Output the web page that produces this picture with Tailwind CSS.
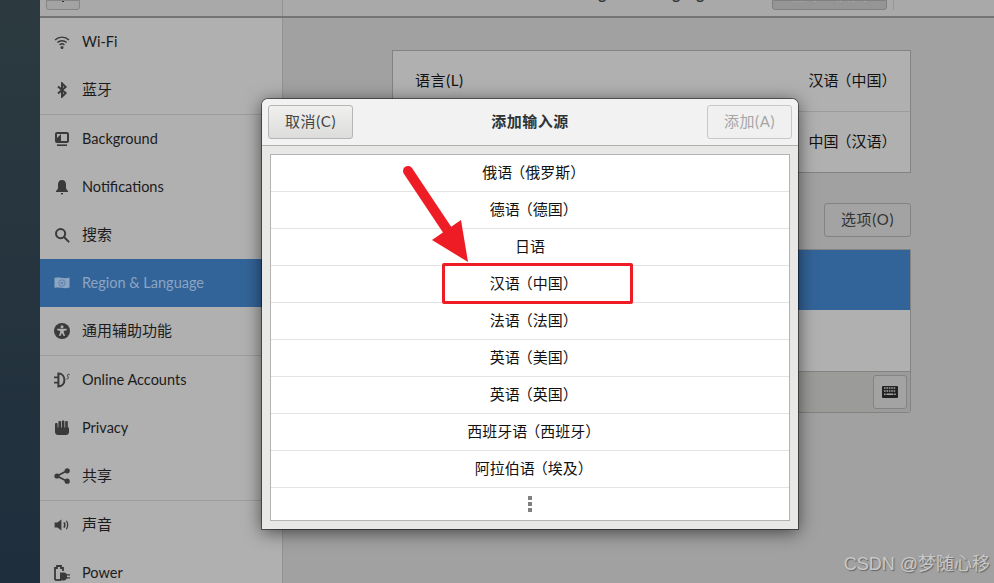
<!DOCTYPE html>
<html lang="zh">
<head>
    <meta charset="UTF-8">
    <title>Region &amp; Language</title>
    <script src="https://cdn.jsdelivr.net/npm/@tailwindcss/browser@4"></script>
</head>
<body class="w-[994px] h-[583px] overflow-hidden relative flex bg-[#22313c] font-['Lato','Noto_Sans_CJK_SC',sans-serif] text-[15px] [font-feature-settings:'halt'] [word-spacing:1.6px]">
    <!-- desktop strip -->
    <div class="w-[40px] h-full shrink-0 bg-gradient-to-b from-[#2c3a40] to-[#1e2e3c]"></div>

    <!-- settings window -->
    <div class="w-[954px] h-full flex flex-col">
        <div class="h-[18px] shrink-0 flex bg-[#a9a9a9] border-b-2 border-[#747474] overflow-hidden">
            <div class="w-[243px] border-r border-[#929292] pl-[6px]">
                <div class="w-[34px] h-[10px] bg-[#a3a3a3] border border-[#858585] rounded-b-[3px] flex justify-center">
                    <div class="w-[2px] h-[1px] bg-[#333]"></div>
                </div>
            </div>
            <div class="flex-1 flex">
                <div class="w-[489px] h-[16px] overflow-hidden flex justify-end pr-[60px]">
                    <div class="font-bold text-[#2e3436] -mt-[17px] leading-[20px] whitespace-nowrap">Region &amp; Language</div>
                </div>
                <div class="w-[115px] h-[10px] bg-[#959595] border border-[#808080] rounded-b-[3px] overflow-hidden flex justify-center">
                    <div class="-mt-[17px] leading-[20px] text-[#b5b5b5] whitespace-nowrap">立即重启(R)</div>
                </div>
                <div class="w-px h-[10px] bg-[#969696] ml-[6px]"></div>
            </div>
        </div>
        <div class="flex-1 flex min-h-0">
            <!-- sidebar -->
            <div class="w-[243px] shrink-0 bg-[#b0b0b0] border-r border-[#929292] text-[#1c1c1c] [word-spacing:0]">
                <div class="h-[47px] flex items-center pl-[14px] gap-[12px]">
                    <svg class="w-[16px] h-[16px] shrink-0" viewBox="0 0 16 16" fill="none" stroke="#3a3a3a" stroke-width="1.4"><path d="M1 6 A10 10 0 0 1 15 6"/><path d="M3.4 8.6 A6.6 6.6 0 0 1 12.6 8.6"/><path d="M5.6 11 A3.4 3.4 0 0 1 10.4 11"/><circle cx="8" cy="13.6" r="1.5" fill="#3a3a3a" stroke="none"/></svg>
                    <span class="text-[14.5px]">Wi-Fi</span>
                </div>
                <div class="h-[49px] flex items-center pl-[14px] gap-[12px]">
                    <svg class="w-[16px] h-[16px] shrink-0" viewBox="0 0 16 16" fill="none" stroke="#3a3a3a" stroke-width="2"><path d="M4 4.6 L11.6 11 L8 14.6 V1.4 L11.6 5 L4 11.4"/></svg>
                    <span>蓝牙</span>
                </div>
                <div class="h-px bg-[#9c9c9c]"></div>
                <div class="h-[48px] flex items-center pl-[14px] gap-[12px]">
                    <svg class="w-[16px] h-[16px] shrink-0" viewBox="0 0 16 16"><rect x="1" y="1" width="14" height="11" rx="2" fill="#3a3a3a"/><rect x="3" y="3" width="10" height="7" fill="#b0b0b0"/><path d="M3 10 V7 L7 3 V10 Z" fill="#3a3a3a"/><rect x="3" y="13.4" width="10" height="1.6" fill="#3a3a3a"/></svg>
                    <span class="text-[14.5px]">Background</span>
                </div>
                <div class="h-[48px] flex items-center pl-[14px] gap-[12px]">
                    <svg class="w-[16px] h-[16px] shrink-0" viewBox="0 0 16 16" fill="#3a3a3a"><path d="M8 1 C5.4 1 4 3 4 5.4 V8.4 C4 10 3 11 2 12 V13 H14 V12 C13 11 12 10 12 8.4 V5.4 C12 3 10.6 1 8 1 Z"/><rect x="7" y="14" width="2" height="1.4"/></svg>
                    <span class="text-[14.5px]">Notifications</span>
                </div>
                <div class="h-[48px] flex items-center pl-[14px] gap-[12px]">
                    <svg class="w-[16px] h-[16px] shrink-0" viewBox="0 0 16 16" fill="none" stroke="#3a3a3a" stroke-width="2"><circle cx="6.6" cy="6.6" r="4.6"/><path d="M10 10 L14.6 14.6" stroke-linecap="round"/></svg>
                    <span class="-mt-[2px]">搜索</span>
                </div>
                <div class="h-[48px] flex items-center pl-[14px] gap-[12px] bg-[#336499] text-[#8ba5c2]">
                    <svg class="w-[16px] h-[16px] shrink-0" viewBox="0 0 16 16" fill="none"><path d="M0.5 3 C5 1.6 10 4.4 15.5 2.6 V12.6 C10 14.2 5 11.6 0.5 13 Z" fill="#8ba5c2"/><circle cx="8" cy="8" r="3.2" stroke="#5f84ad" stroke-width="1"/><circle cx="8" cy="8" r="1.3" fill="#5f84ad"/></svg>
                    <span class="text-[14.5px]">Region &amp; Language</span>
                </div>
                <div class="h-[48px] flex items-center pl-[14px] gap-[12px]">
                    <svg class="w-[16px] h-[16px] shrink-0" viewBox="0 0 16 16"><circle cx="8" cy="8" r="8" fill="#3a3a3a"/><circle cx="8" cy="3.8" r="1.5" fill="#b0b0b0"/><path d="M3.2 5.8 H12.8 V7.2 L9.6 8 L11 13 H9.6 L8 10 L6.4 13 H5 L6.4 8 L3.2 7.2 Z" fill="#b0b0b0"/></svg>
                    <span class="-mt-[2px]">通用辅助功能</span>
                </div>
                <div class="h-px bg-[#9c9c9c]"></div>
                <div class="h-[48px] flex items-center pl-[14px] gap-[12px]">
                    <svg class="w-[16px] h-[16px] shrink-0" viewBox="0 0 16 16" fill="none" stroke="#3a3a3a" stroke-width="1.6"><path d="M0 5.4 H4.6 M0 10.6 H4.6"/><path d="M4.4 1.6 C8.4 1.6 10.4 4.6 10.4 8 C10.4 11.4 8.4 14.4 4.4 14.4 Z" stroke-width="2"/><path d="M15.6 2.6 C14 1.6 13 2.8 13.8 4.2 C14.6 5.6 14.2 7.6 12.4 6.8" stroke-width="1"/></svg>
                    <span class="text-[14.5px]">Online Accounts</span>
                </div>
                <div class="h-[48px] flex items-center pl-[14px] gap-[12px]">
                    <svg class="w-[16px] h-[16px] shrink-0" viewBox="0 0 16 16" fill="#3a3a3a"><rect x="1" y="3" width="2.6" height="8" rx="1"/><rect x="4.4" y="1" width="2.6" height="8" rx="1"/><rect x="7.8" y="0.4" width="2.6" height="8" rx="1"/><rect x="11.2" y="1" width="2.6" height="8" rx="1"/><path d="M1 7.6 H15 V12 C15 14 13.6 15 12 15 H4 C2.4 15 1 14 1 12 Z"/></svg>
                    <span class="text-[14.5px]">Privacy</span>
                </div>
                <div class="h-[48px] flex items-center pl-[14px] gap-[12px]">
                    <svg class="w-[16px] h-[16px] shrink-0" viewBox="0 0 16 16" fill="#3a3a3a" stroke="#3a3a3a"><path d="M3 8 L13 2.8 M3 8 L13 13.2" stroke-width="1.6" fill="none"/><circle cx="3" cy="8" r="2.6" stroke="none"/><circle cx="13.2" cy="2.8" r="2.6" stroke="none"/><circle cx="13.2" cy="13.2" r="2.6" stroke="none"/></svg>
                    <span class="-mt-[2px]">共享</span>
                </div>
                <div class="h-px bg-[#9c9c9c]"></div>
                <div class="h-[48px] flex items-center pl-[14px] gap-[12px]">
                    <svg class="w-[16px] h-[16px] shrink-0" viewBox="0 0 16 16" fill="none"><path d="M0.6 5.6 H3.4 L7.4 2.4 V13.6 L3.4 10.4 H0.6 Z" fill="#3a3a3a"/><path d="M10 5.4 C11 7 11 9 10 10.6" stroke="#3a3a3a" stroke-width="1.6"/><path d="M12.4 3.8 C14 6.4 14 9.6 12.4 12.2" stroke="#3a3a3a" stroke-width="1.2"/></svg>
                    <span class="-mt-[2px]">声音</span>
                </div>
                <div class="h-[48px] flex items-center pl-[14px] gap-[12px]">
                    <svg class="w-[16px] h-[16px] shrink-0" viewBox="0 0 16 16" fill="none"><path d="M1 15 V3 H3 V1 H7 V3 H9 V6" stroke="#3a3a3a" stroke-width="1.8"/><path d="M1 15 H7" stroke="#3a3a3a" stroke-width="1.8"/><path d="M6 7.6 H10 C11.6 7.6 12.4 8.4 12.6 9.2 H16 V10.6 H13 V12.2 H16 V13.6 H12.6 C12.4 14.6 11.6 15.4 10 15.4 H6 Z" fill="#3a3a3a"/></svg>
                    <span class="text-[14.5px]">Power</span>
                </div>
            </div>
            <!-- main panel -->
            <div class="flex-1 bg-[#a1a1a1] pt-[32px] pl-[109px]">
                <div class="w-[519px] h-[123px] bg-[#b0b0b0] border border-[#838383] flex flex-col text-[#111]">
                    <div class="h-[61px] shrink-0 flex items-center justify-between pl-[22px] pr-[21px] pb-[2px] border-b border-[#9c9c9c]">
                        <span class="tracking-[0.6px]">语言(L)</span><span>汉语 （中国）</span>
                    </div>
                    <div class="flex-1 flex items-center justify-end pr-[21px] pb-[2px]">中国 （汉语）</div>
                </div>
                <div class="w-[519px] flex justify-end mt-[30px]">
                    <div class="w-[87px] h-[34px] pb-[2px] flex items-center justify-center bg-[#a3a3a3] border border-[#838383] rounded-[3px] text-[#333] tracking-[0.6px]">选项(O)</div>
                </div>
                <div class="w-[519px] h-[164px] mt-[12px] border border-[#838383] rounded-b-[3px] flex flex-col">
                    <div class="h-[60px] shrink-0 bg-[#336499]"></div>
                    <div class="h-[62px] shrink-0 bg-[#b0b0b0] border-b border-[#838383]"></div>
                    <div class="flex-1 bg-[#9b9b9a] flex justify-end items-center pr-[3px]">
                        <div class="w-[34px] h-[34px] bg-[#a3a3a3] border border-[#838383] rounded-[3px] flex items-center justify-center">
                            <svg width="16" height="12" viewBox="0 0 16 12"><rect width="16" height="12" rx="1" fill="#222"/><path d="M2 2 H14 M2 5 H14" stroke="#a3a3a3" stroke-width="1.4" stroke-dasharray="1.6 0.8"/><path d="M2 8.2 H14" stroke="#a3a3a3" stroke-width="1.4" stroke-dasharray="1.6 0.8 7 0.8 1.6 0.8"/></svg>
                        </div>
                    </div>
                </div>
            </div>
        </div>
    </div>

    <!-- dialog -->
    <div class="absolute left-[262px] top-[99px] w-[536px] h-[430px] bg-[#e8e8e7] rounded-t-[6px] shadow-[0_0_0_1px_rgba(0,0,0,0.45),0_3px_18px_rgba(0,0,0,0.6)] flex flex-col">
        <div class="h-[47px] shrink-0 bg-[#f2f2f2] rounded-t-[6px] border-b border-[#b0b0ae] flex items-center justify-between px-[6px]">
            <div class="w-[85px] h-[34px] pb-[2px] flex items-center justify-center rounded-[3px] border border-[#b5b5b3] bg-gradient-to-b from-[#f0f0ef] to-[#dcdcda] text-[#444] tracking-[0.6px]">取消(C)</div>
            <div class="font-bold tracking-[0.5px] text-[#2e3436] -mt-[2px]">添加输入源</div>
            <div class="w-[85px] h-[34px] pb-[2px] flex items-center justify-center rounded-[3px] border border-[#c8c8c6] bg-[#f0f0f0] text-[#a5a5a5] tracking-[0.6px]">添加(A)</div>
        </div>
        <div class="flex-1 min-h-0 px-[8px] pt-[8px] pb-[8px]">
            <div class="h-full bg-white border border-[#b4b4b2] text-[#111] flex flex-col">
                <div class="h-[37px] shrink-0 pb-[2px] flex items-center justify-center border-b border-[#e3e3e3]">俄语 （俄罗斯）</div>
                <div class="h-[37px] shrink-0 pb-[2px] flex items-center justify-center border-b border-[#e3e3e3]">德语 （德国）</div>
                <div class="h-[37px] shrink-0 pb-[2px] flex items-center justify-center border-b border-[#e3e3e3]">日语</div>
                <div class="h-[37px] shrink-0 pb-[2px] flex items-center justify-center border-b border-[#e3e3e3]">汉语 （中国）</div>
                <div class="h-[37px] shrink-0 pb-[2px] flex items-center justify-center border-b border-[#e3e3e3]">法语 （法国）</div>
                <div class="h-[37px] shrink-0 pb-[2px] flex items-center justify-center border-b border-[#e3e3e3]">英语 （美国）</div>
                <div class="h-[37px] shrink-0 pb-[2px] flex items-center justify-center border-b border-[#e3e3e3]">英语 （英国）</div>
                <div class="h-[37px] shrink-0 pb-[2px] flex items-center justify-center border-b border-[#e3e3e3]">西班牙语 （西班牙）</div>
                <div class="h-[37px] shrink-0 pb-[2px] flex items-center justify-center border-b border-[#e3e3e3]">阿拉伯语 （埃及）</div>
                <div class="flex-1 flex flex-col items-center justify-center gap-[2px]">
                    <div class="w-[4px] h-[4px] bg-[#808080]"></div>
                    <div class="w-[4px] h-[4px] bg-[#808080]"></div>
                    <div class="w-[4px] h-[4px] bg-[#808080]"></div>
                </div>
            </div>
        </div>
    </div>

    <!-- annotation -->
    <div class="absolute left-[442px] top-[263px] w-[191px] h-[41px] border-[3px] border-[#ee1c25] rounded-[2px]"></div>
    <svg class="absolute left-[400px] top-[164px]" width="72" height="104" viewBox="0 0 72 104">
        <path d="M8 7 L50 70" stroke="#ee1c25" stroke-width="10" stroke-linecap="round" fill="none"/>
        <path d="M68 98 L32 76 L61 56 Z" fill="#ee1c25"/>
    </svg>

    <!-- watermark -->
    <div class="absolute right-[4px] top-[554px] font-['Liberation_Sans','Noto_Sans_CJK_SC',sans-serif] text-[#c8c8c8] text-[18px] leading-[21px] [word-spacing:0] [text-shadow:1px_1px_1px_rgba(60,60,60,0.6)]">CSDN @梦随心移</div>
</body>
</html>
